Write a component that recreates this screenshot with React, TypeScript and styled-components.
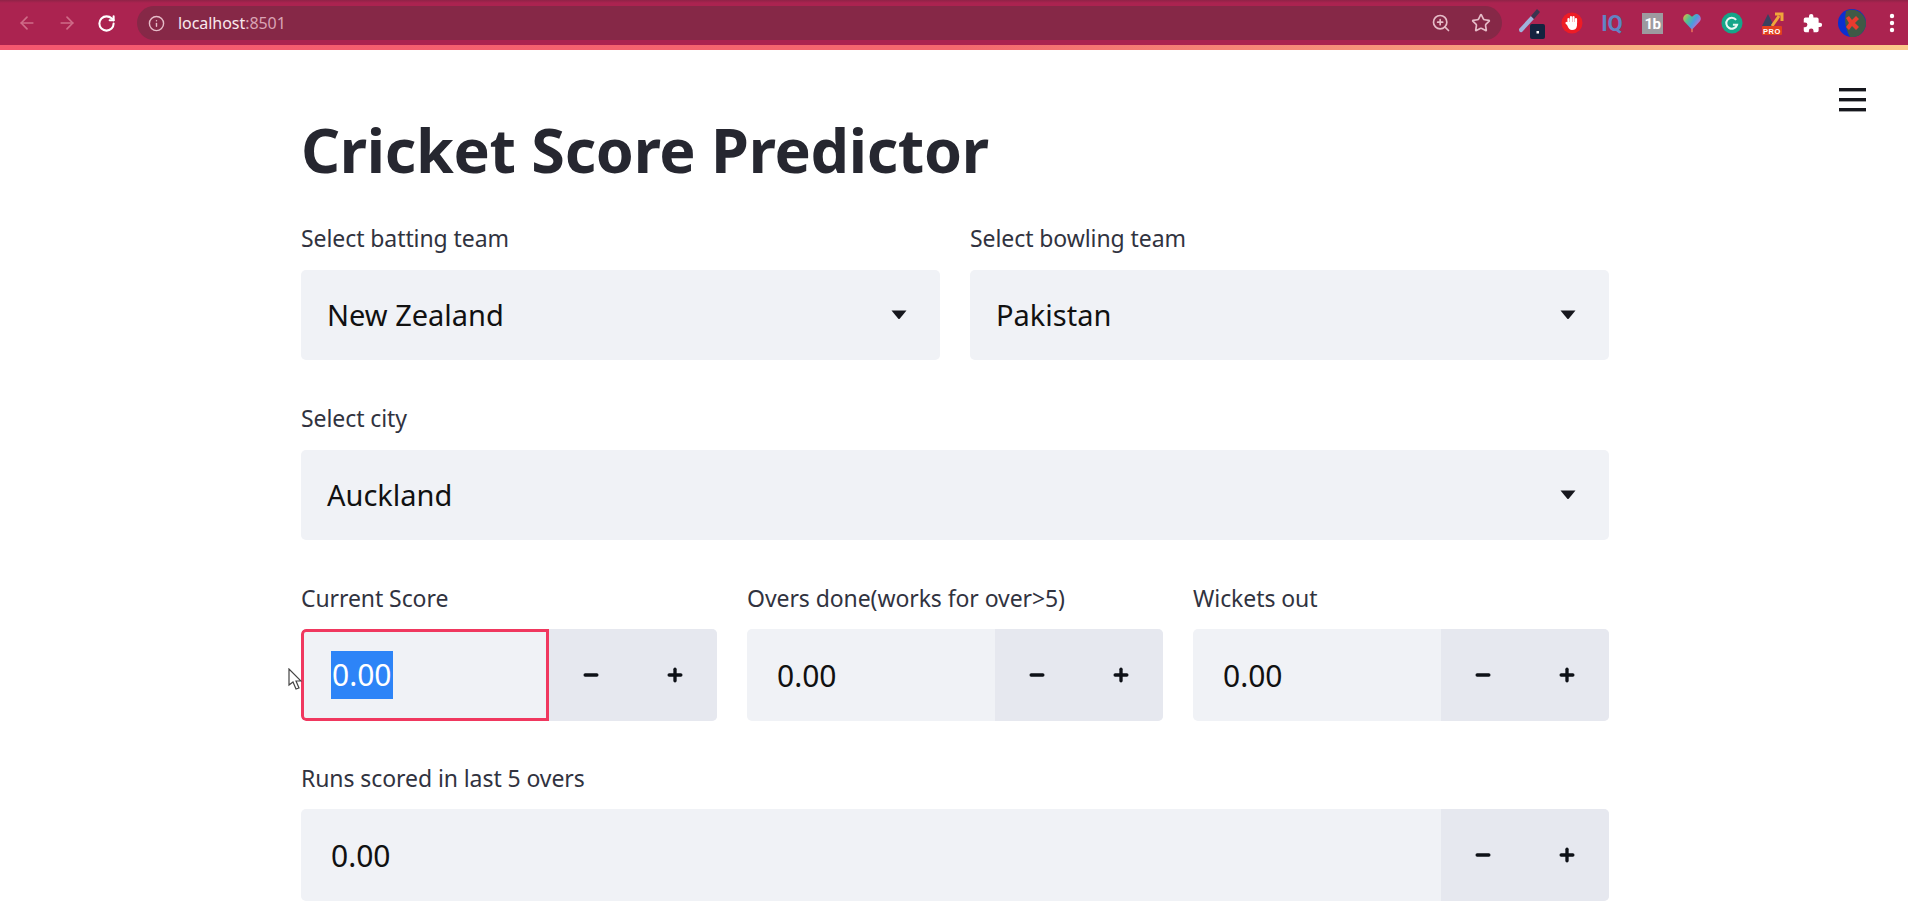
import styled, { createGlobalStyle } from 'styled-components'
import { ArrowLeft, ArrowRight, RotateCw, Info, ZoomIn, Star, Minus, Plus } from 'lucide-react'

const GlobalStyle = createGlobalStyle`
  html, body {
    margin: 0;
    height: 100%;
    overflow: hidden;
    background: #fff;
    font-family: "Noto Sans", Roboto, sans-serif;
  }
`

const Page = styled.div`
  position: relative;
  width: 1908px;
  height: 914px;
  overflow: hidden;
`

const BrowserBar = styled.header`
  display: flex;
  align-items: center;
  height: 50px;
  box-sizing: border-box;
  padding: 1px 0 0 17px;
  background: linear-gradient(#8f2347 0, #ab2350 3px, #ab2350 100%);
  border-bottom: 5px solid;
  border-image: linear-gradient(90deg, #f4576f 0%, #f4686e 50%, #fbc98a 100%) 1;
`

const NavButton = styled.span<{ $dim?: boolean }>`
  display: flex;
  width: 40px;
  color: ${({ $dim }) => ($dim ? '#cf6c88' : '#fff')};
`

const AddressBar = styled.div`
  display: flex;
  align-items: center;
  flex: 1;
  height: 34px;
  padding: 0 11px;
  border-radius: 17px;
  background: #862847;
  color: #e6bcc8;
`

const Url = styled.span`
  margin-left: 13px;
  font-size: 16px;
  letter-spacing: -0.05px;
  color: #f9e8ee;
`

const Port = styled.span`
  color: #d9a3b4;
`

const AddressActions = styled.div`
  display: flex;
  align-items: center;
  gap: 20px;
  margin-left: auto;
`

const Extensions = styled.div`
  display: flex;
  align-items: center;
  margin: 0 -4px 0 10px;
`

const ExtensionSlot = styled.span`
  display: flex;
  align-items: center;
  justify-content: center;
  width: 40px;
  height: 40px;
`

const Main = styled.main`
  width: 1308px;
  margin-left: 301px;
`

const Title = styled.h1`
  margin: 0;
  padding-top: 59px;
  height: 173px;
  box-sizing: border-box;
  font-size: 61px;
  line-height: 82px;
  font-weight: 700;
  letter-spacing: -0.3px;
  color: #262730;
`

const Row = styled.div<{ $columns: number }>`
  display: grid;
  grid-template-columns: repeat(${({ $columns }) => $columns}, 1fr);
  gap: 30px;
  height: 180px;
`

const Field = styled.div`
  display: flex;
  flex-direction: column;
`

const Label = styled.label`
  height: 30px;
  margin-bottom: 16px;
  font-size: 23px;
  line-height: 30px;
  color: #31333f;
  letter-spacing: -0.08px;
`

const SelectBox = styled.div`
  display: flex;
  align-items: center;
  justify-content: space-between;
  height: 90px;
  margin-top: 1px;
  padding: 0 33px 2px 26px;
  box-sizing: border-box;
  border-radius: 5px;
  background: #f0f2f6;
  font-size: 29px;
  color: #111;
`

const Caret = styled.svg`
  margin-top: 2px;
`

const NumberBox = styled.div`
  display: flex;
  height: 92px;
  border-radius: 5px;
  background: #f0f2f6;
  overflow: hidden;
`

const NumberValue = styled.div<{ $focused?: boolean }>`
  flex: 1;
  display: flex;
  align-items: center;
  box-sizing: border-box;
  padding-left: ${({ $focused }) => ($focused ? '27px' : '30px')};
  border: ${({ $focused }) => ($focused ? '3px solid #f0385f' : 'none')};
  border-radius: 5px 0 0 5px;
  font-size: 30px;
  color: #111;
`

const Selected = styled.span`
  display: block;
  padding: 0 1px;
  line-height: 48px;
  background: #2d84f7;
  color: #fff;
`

const Stepper = styled.div`
  display: flex;
  flex: 0 0 168px;
  background: #e6e8ef;
`

const StepButton = styled.span`
  flex: 1;
  display: flex;
  align-items: center;
  justify-content: center;
  color: #0e1117;
`

const Hamburger = styled.svg`
  position: absolute;
  top: 88px;
  left: 1839px;
`

const Cursor = styled.svg`
  position: absolute;
  left: 288px;
  top: 668px;
`

const NumberField = ({ label, focused }: { label: string; focused?: boolean }) => (
  <Field>
    <Label>{label}</Label>
    <NumberBox>
      <NumberValue $focused={focused}>{focused ? <Selected>0.00</Selected> : '0.00'}</NumberValue>
      <Stepper>
        <StepButton><Minus size={20} strokeWidth={4} /></StepButton>
        <StepButton><Plus size={20} strokeWidth={4} /></StepButton>
      </Stepper>
    </NumberBox>
  </Field>
)

const SelectField = ({ label, value }: { label: string; value: string }) => (
  <Field>
    <Label>{label}</Label>
    <SelectBox>
      {value}
      <Caret width="16" height="10" viewBox="0 0 16 10">
        <path d="M0.5 0.5 H15.5 L8.9 8.6 Q8 9.6 7.1 8.6 Z" fill="#16171d" />
      </Caret>
    </SelectBox>
  </Field>
)

const extensionIcons = [
  <svg key="picker" width="30" height="34" viewBox="0 0 30 34">
    <path d="M2 23 L14 10 L17 13 L5 26 Q2 27 2 23 Z" fill="#9fb4dc" />
    <path d="M14 10 L20 3 L23 6 L17 13 Z" fill="#3a3550" />
    <rect x="13" y="18" width="15" height="15" rx="2" fill="#14233f" />
    <rect x="19.5" y="25" width="2.5" height="2.5" fill="#fff" />
  </svg>,
  <svg key="hand" width="22" height="22" viewBox="0 0 22 22" fill="none">
    <circle cx="11" cy="11" r="10.5" fill="#ee1c25" />
    <path d="M7.5 11 V7 M10 10 V5 M12.5 10 V5 M15 11 V7 M7.5 13 L5.5 11" stroke="#fff" strokeWidth="2.2" strokeLinecap="round" />
    <path d="M6.5 10 H16 V13.5 A5 5 0 0 1 11 18 Q8 18 6.5 14 Z" fill="#fff" />
  </svg>,
  <svg key="iq" width="28" height="24" viewBox="0 0 28 24">
    <text x="14" y="20" textAnchor="middle" fontSize="22" fontWeight="700" fill="#6184c4" fontFamily="Roboto, sans-serif">IQ</text>
  </svg>,
  <svg key="oneb" width="21" height="21" viewBox="0 0 21 21">
    <rect width="21" height="21" fill="#9d9a9f" />
    <text x="10.5" y="16" textAnchor="middle" fontSize="15" fontWeight="700" fill="#fff" letterSpacing="-0.5" fontFamily="Roboto, sans-serif">1b</text>
  </svg>,
  <svg key="heart" width="20" height="22" viewBox="0 0 24 26">
    <defs>
      <linearGradient id="heartFill" x1="0" y1="0" x2="1" y2="0.6">
        <stop offset="0" stopColor="#f2b33a" />
        <stop offset="0.35" stopColor="#55c28c" />
        <stop offset="0.65" stopColor="#4a9be0" />
        <stop offset="1" stopColor="#d765c9" />
      </linearGradient>
    </defs>
    <path d="M12 21 L2.5 11 C-1 6 5 0 9 3 L12 5.5 L15 3 C19 0 25 6 21.5 11 Z" fill="url(#heartFill)" />
    <rect x="11" y="20" width="2" height="4" fill="#e46d5c" />
  </svg>,
  <svg key="grammarly" width="22" height="22" viewBox="0 0 24 24" fill="none">
    <circle cx="12" cy="12" r="11.5" fill="#15a589" />
    <path d="M16.5 8.5 A6 6 0 1 0 17.5 14 H13" stroke="#e8f7f3" strokeWidth="2.2" />
  </svg>,
  <svg key="pro" width="26" height="26" viewBox="0 0 26 26">
    <path d="M3 16 L9 4 L15 16 Z" fill="#3a4160" />
    <path d="M13 16 L20 6 M16 4 H23 V11" stroke="#f0a63a" strokeWidth="3" fill="none" />
    <rect x="3" y="16" width="20" height="9" rx="1" fill="#e2401f" />
    <text x="13" y="23.5" textAnchor="middle" fontSize="7.5" fontWeight="700" fill="#fff" letterSpacing="0.5" fontFamily="Liberation Sans, sans-serif">PRO</text>
  </svg>,
  <svg key="puzzle" width="21" height="21" viewBox="0 0 24 24">
    <path d="M20.5 11H19V7a2 2 0 0 0-2-2h-4V3.5a2.5 2.5 0 0 0-5 0V5H4a2 2 0 0 0-2 2v3.8h1.5a2.7 2.7 0 0 1 0 5.4H2V20a2 2 0 0 0 2 2h3.8v-1.5a2.7 2.7 0 0 1 5.4 0V22H17a2 2 0 0 0 2-2v-4h1.5a2.5 2.5 0 0 0 0-5z" fill="#fff" />
  </svg>,
  <svg key="avatar" width="28" height="28" viewBox="0 0 28 28">
    <circle cx="14" cy="14" r="14" fill="#0b2fd0" />
    <path d="M8 2 A14 14 0 0 1 28 14 A14 14 0 0 1 12 28 Q5 16 8 2 Z" fill="#3f5a46" />
    <path d="M8 9 L11 7 L14 11 L18 7 L21 10 L17 14 L21 18 L18 21 L14 17 L11 21 L8 18 L11 14 Z" fill="#ea3b2f" />
  </svg>,
  <svg key="dots" width="6" height="20" viewBox="0 0 6 20" fill="#fff">
    <circle cx="3" cy="3" r="2.2" />
    <circle cx="3" cy="10" r="2.2" />
    <circle cx="3" cy="17" r="2.2" />
  </svg>,
]

export default function App() {
  return (
    <Page>
      <GlobalStyle />
      <BrowserBar>
        <NavButton $dim><ArrowLeft size={20} /></NavButton>
        <NavButton $dim><ArrowRight size={20} /></NavButton>
        <NavButton><RotateCw size={19} strokeWidth={2.6} /></NavButton>
        <AddressBar>
          <Info size={17} />
          <Url>localhost<Port>:8501</Port></Url>
          <AddressActions>
            <ZoomIn size={20} />
            <Star size={20} />
          </AddressActions>
        </AddressBar>
        <Extensions>
          {extensionIcons.map((icon) => (
            <ExtensionSlot key={icon.key}>{icon}</ExtensionSlot>
          ))}
        </Extensions>
      </BrowserBar>
      <Hamburger width="27" height="24" viewBox="0 0 27 24" fill="#16171d">
        <rect y="0" width="27" height="3.4" />
        <rect y="10" width="27" height="3.4" />
        <rect y="20" width="27" height="3.4" />
      </Hamburger>
      <Main>
        <Title>Cricket Score Predictor</Title>
        <Row $columns={2}>
          <SelectField label="Select batting team" value="New Zealand" />
          <SelectField label="Select bowling team" value="Pakistan" />
        </Row>
        <Row $columns={1}>
          <SelectField label="Select city" value="Auckland" />
        </Row>
        <Row $columns={3}>
          <NumberField label="Current Score" focused />
          <NumberField label="Overs done(works for over>5)" />
          <NumberField label="Wickets out" />
        </Row>
        <Row $columns={1}>
          <NumberField label="Runs scored in last 5 overs" />
        </Row>
      </Main>
      <Cursor width="14" height="24" viewBox="0 0 14 24">
        <path d="M1 1 L1 17 L5 14 L8 21 L11 20 L8 13 L13 13 Z" fill="#fff" stroke="#444" strokeWidth="1.2" />
      </Cursor>
    </Page>
  )
}
